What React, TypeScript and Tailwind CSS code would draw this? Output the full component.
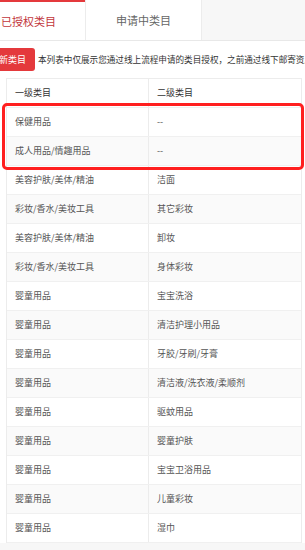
const rows: [string, string][] = [
  ["保健用品", "--"],
  ["成人用品/情趣用品", "--"],
  ["美容护肤/美体/精油", "洁面"],
  ["彩妆/香水/美妆工具", "其它彩妆"],
  ["美容护肤/美体/精油", "卸妆"],
  ["彩妆/香水/美妆工具", "身体彩妆"],
  ["婴童用品", "宝宝洗浴"],
  ["婴童用品", "清洁护理小用品"],
  ["婴童用品", "牙胶/牙刷/牙膏"],
  ["婴童用品", "清洁液/洗衣液/柔顺剂"],
  ["婴童用品", "驱蚊用品"],
  ["婴童用品", "婴童护肤"],
  ["婴童用品", "宝宝卫浴用品"],
  ["婴童用品", "儿童彩妆"],
  ["婴童用品", "湿巾"],
];

const App = () => {
  return (
    <div className="relative w-[305px] h-[550px] overflow-hidden bg-[#f7f7f7] font-['Noto_Sans_CJK_SC','Noto_Sans',sans-serif]">
      {/* tabs */}
      <div className="flex h-[41px] border-b border-[#e8e8e8] bg-[#f7f7f7]">
        <div className="w-[85px] bg-white border-t-2 border-[#e4393c] flex items-center pl-[1px] text-[11px] text-[#c2363c]">
          已授权类目
        </div>
        <div className="w-[117px] bg-white border-l border-r border-[#ececec] flex items-center justify-center text-[11px] text-[#666]">
          申请中类目
        </div>
      </div>

      <div className="bg-white pt-[7px]">
        {/* info line */}
        <div className="flex items-center h-[23px] whitespace-nowrap">
          <div className="h-[23px] w-[37px] bg-[#e4393c] rounded-r-[3px] flex items-center justify-end pr-[9px] text-[9px] text-white -ml-[1px]">
            新类目
          </div>
          <span className="ml-[3px] text-[8.6px] text-[#333]">
            本列表中仅展示您通过线上流程申请的类目授权，之前通过线下邮寄资质的类目
          </span>
        </div>

        {/* table */}
        <div className="mt-[7px] ml-[6px] w-[296px] border-l border-t border-r border-[#ececec]">
          <div className="flex h-[29px] items-center bg-white border-b border-[#f0f0f0] text-[9px] text-[#333]">
            <div className="w-[142px] h-full flex items-center pl-[8px] border-r border-[#ececec]">一级类目</div>
            <div className="flex-1 pl-[8px]">二级类目</div>
          </div>
          {rows.map(([a, b], i) => (
            <div
              key={i}
              className={`flex h-[29px] items-center border-b border-[#f0f0f0] text-[9px] text-[#555] ${
                i % 2 === 1 ? "bg-[#fafafa]" : "bg-white"
              }`}
            >
              <div className="w-[142px] h-full flex items-center pl-[8px] border-r border-[#ececec]">{a}</div>
              <div className="flex-1 pl-[8px]">{b}</div>
            </div>
          ))}
        </div>
      </div>

      {/* annotation box */}
      <div className="absolute left-[2px] top-[103px] w-[302px] h-[67px] border-[3px] border-[#ff1f1f] rounded-[5px]" />
    </div>
  );
};

export default App;
